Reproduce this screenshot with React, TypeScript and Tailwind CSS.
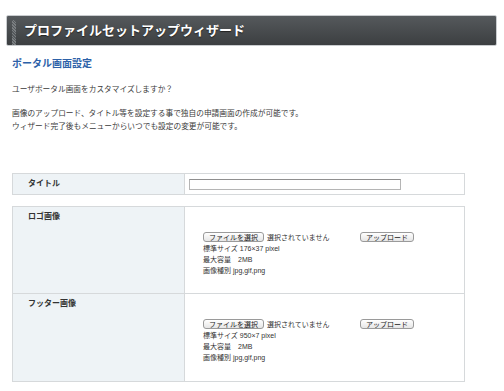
import React from 'react';

const font = { fontFamily: '"Liberation Sans", "Noto Sans CJK JP", sans-serif' };

function FakeButton({ label, width }: { label: string; width: string }) {
  return (
    <div
      className={`${width} h-[10px] flex items-center justify-center rounded-[3px] border border-[#9a9a9a] bg-gradient-to-b from-white to-[#e6e6e6] text-[7px] leading-none text-[#222]`}
    >
      {label}
    </div>
  );
}

function UploadCell({ size }: { size: string }) {
  return (
    <div className="flex flex-col pl-[18px] pt-[25px] text-[7px] leading-[11px] text-[#333]">
      <div className="flex items-center h-[10px] mb-[1px]">
        <FakeButton label="ファイルを選択" width="w-[61px]" />
        <span className="ml-[3px] w-[93px]">選択されていません</span>
        <FakeButton label="アップロード" width="w-[54px]" />
      </div>
      <div>標準サイズ {size} pixel</div>
      <div>最大容量　2MB</div>
      <div>画像種別 jpg,gif,png</div>
    </div>
  );
}

export default function App() {
  return (
    <div className="w-[504px] h-[391px] bg-white overflow-hidden" style={font}>
      {/* Wizard header */}
      <div className="pt-[15px] px-[6px]">
        <div className="w-[491px] h-[31px] flex items-stretch rounded-[2px] border border-[#c9cccf] bg-gradient-to-b from-[#55595c] to-[#3c3f41]">
          <div className="ml-[5px] mt-[4px] w-[4px] bg-[repeating-linear-gradient(45deg,#7a7e81_0px,#7a7e81_1px,#55595c_1px,#55595c_2px)]" />
          <div className="ml-[8px] flex items-center text-[13px] font-bold text-white [text-shadow:0_1px_1px_#222]">
            プロファイルセットアップウィザード
          </div>
        </div>
      </div>

      <div className="px-[12px]">
        <h2 className="mt-[11px] text-[10px] leading-[14px] font-bold text-[#2c61a8]">ポータル画面設定</h2>

        <div className="mt-[12px] text-[7.7px] leading-[13px] text-[#3a3a3a]">
          <p>ユーザポータル画面をカスタマイズしますか？</p>
          <p className="mt-[11px]">画像のアップロード、タイトル等を設定する事で独自の申請画面の作成が可能です。</p>
          <p>ウィザード完了後もメニューからいつでも設定の変更が可能です。</p>
        </div>

        {/* Title table */}
        <div className="mt-[40px] w-[453px] h-[22px] flex border border-[#d6d9db]">
          <div className="w-[172px] bg-[#eef3f6] border-r border-[#d6d9db] pl-[15px] flex items-center text-[8px] font-bold text-[#333]">
            タイトル
          </div>
          <div className="flex items-center pl-[4px]">
            <div className="w-[212px] h-[11px] border border-[#b5b5b5] border-t-[#8f8f8f] bg-white" />
          </div>
        </div>

        {/* Image table */}
        <div className="mt-[11px] w-[453px] flex flex-col border border-[#d6d9db]">
          <div className="h-[87px] flex border-b border-[#d6d9db]">
            <div className="w-[172px] bg-[#eef3f6] border-r border-[#d6d9db] pl-[15px] pt-[4px] text-[8px] leading-[11px] font-bold text-[#333]">
              ロゴ画像
            </div>
            <UploadCell size="176×37" />
          </div>
          <div className="h-[87px] flex">
            <div className="w-[172px] bg-[#eef3f6] border-r border-[#d6d9db] pl-[15px] pt-[4px] text-[8px] leading-[11px] font-bold text-[#333]">
              フッター画像
            </div>
            <UploadCell size="950×7" />
          </div>
        </div>
      </div>
    </div>
  );
}
